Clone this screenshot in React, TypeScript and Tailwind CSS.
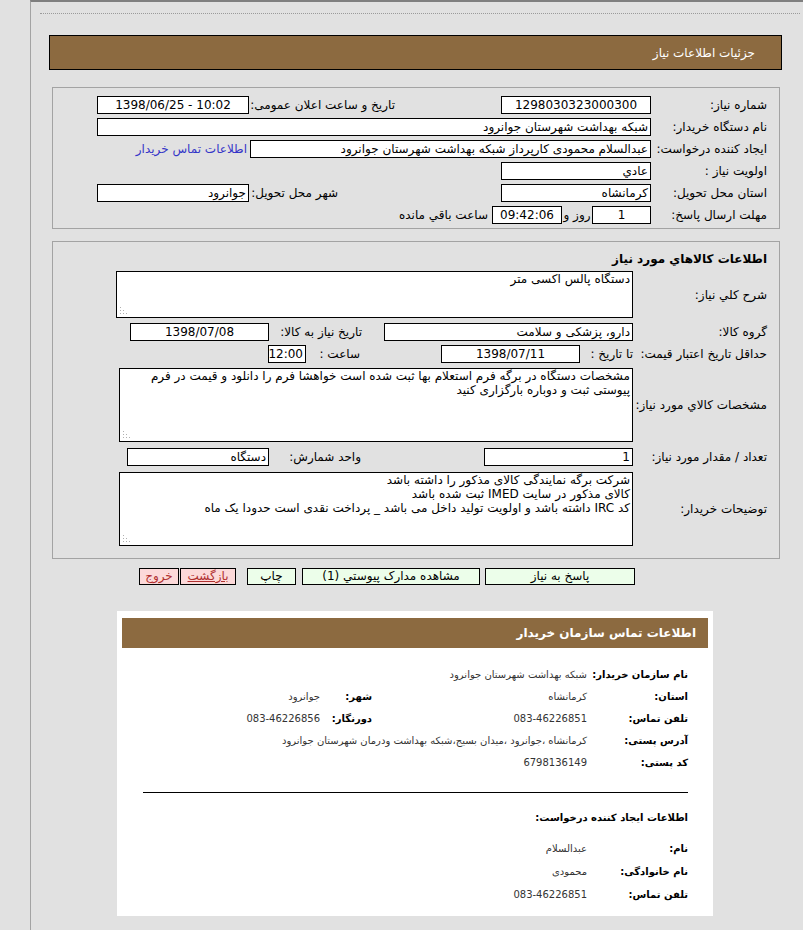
import React from "react";

const box =
  "bg-white border border-black h-[18px] leading-[16px] px-[2px] whitespace-nowrap overflow-hidden shrink-0";

function Grip() {
  return (
    <svg width="9" height="9" className="absolute left-[2px] bottom-[2px]">
      <rect x="1" y="1" width="1" height="1" fill="#b0b0b0" />
      <rect x="1" y="4" width="1" height="1" fill="#b0b0b0" />
      <rect x="4" y="4" width="1" height="1" fill="#b0b0b0" />
      <rect x="1" y="7" width="1" height="1" fill="#b0b0b0" />
      <rect x="4" y="7" width="1" height="1" fill="#b0b0b0" />
      <rect x="7" y="7" width="1" height="1" fill="#b0b0b0" />
    </svg>
  );
}

function L1({ children }: { children: React.ReactNode }) {
  return <div className="w-[128px] pr-[12px] shrink-0 whitespace-nowrap">{children}</div>;
}
function L2({ children }: { children: React.ReactNode }) {
  return <div className="w-[146px] pr-[12px] shrink-0 whitespace-nowrap">{children}</div>;
}

function CRow({ children, h }: { children: React.ReactNode; h?: string }) {
  return <div className={"flex items-center " + (h ?? "h-[22px]")}>{children}</div>;
}
function CLabel({ children }: { children: React.ReactNode }) {
  return <div className="w-[101px] shrink-0 font-bold text-[10px] text-black whitespace-nowrap">{children}</div>;
}
function CVal({ children, w }: { children: React.ReactNode; w?: string }) {
  return (
    <div className={(w ?? "") + " text-[10px] text-[#333] whitespace-nowrap shrink-0"}>{children}</div>
  );
}

export default function App() {
  return (
    <div className="w-[803px] h-[930px] overflow-hidden bg-[#e1e1e1] flex font-['DejaVu_Sans',sans-serif] text-[12px] text-black">
      <div className="w-[30px] shrink-0" />
      <div className="flex-1 border-l border-l-[#a3a3a3] border-t-2 border-t-[#7f7f7f] flex flex-col">
        <div className="mt-[11px] ml-[9px] w-[760px] border-t border-dotted border-[#9a9a9a]" />

        <div
          dir="rtl"
          className="mt-[21px] ml-[18px] w-[733px] h-[35px] bg-[#8c6a40] border border-black flex items-center pr-[26px] text-white"
        >
          جزئیات اطلاعات نیاز
        </div>

        {/* Section 1 */}
        <div dir="rtl" className="mt-[17px] ml-[21px] w-[728px] h-[142px] border border-[#a3a3a3] pt-[6px]">
          <CRow>
            <L1>شماره نیاز:</L1>
            <div className={box + " w-[150px] text-center"}>1298030323000300</div>
            <div className="w-[252px] pr-[106px] shrink-0 whitespace-nowrap">تاریخ و ساعت اعلان عمومی:</div>
            <div dir="ltr" className={box + " w-[152px] text-center"}>1398/06/25 - 10:02</div>
          </CRow>
          <CRow>
            <L1>نام دستگاه خریدار:</L1>
            <div className={box + " w-[554px] text-right"}>شبکه بهداشت شهرستان جوانرود</div>
          </CRow>
          <CRow>
            <L1>ایجاد کننده درخواست:</L1>
            <div className={box + " w-[401px] text-right"}>عبدالسلام محمودی کارپرداز شبکه بهداشت شهرستان جوانرود</div>
            <div className="mr-[3px] text-[#3535c8] whitespace-nowrap">اطلاعات تماس خریدار</div>
          </CRow>
          <CRow>
            <L1>اولویت نیاز :</L1>
            <div className={box + " w-[150px] text-right"}>عادي</div>
          </CRow>
          <CRow>
            <L1>استان محل تحویل:</L1>
            <div className={box + " w-[150px] text-right"}>کرمانشاه</div>
            <div className="w-[252px] pr-[163px] shrink-0 whitespace-nowrap">شهر محل تحویل:</div>
            <div className={box + " w-[152px] text-right"}>جوانرود</div>
          </CRow>
          <CRow>
            <L1>مهلت ارسال پاسخ:</L1>
            <div className={box + " w-[59px] text-center"}>1</div>
            <div className="w-[30px] shrink-0 text-center whitespace-nowrap">روز و</div>
            <div className={box + " w-[70px] text-center"}>09:42:06</div>
            <div className="mr-[4px] whitespace-nowrap">ساعت باقي مانده</div>
          </CRow>
        </div>

        {/* Section 2 */}
        <div dir="rtl" className="mt-[12px] ml-[21px] w-[728px] h-[318px] border border-[#a3a3a3] flex flex-col">
          <div className="h-[29px] pt-[9px] pr-[12px] font-bold leading-[16px] shrink-0">اطلاعات كالاهاي مورد نياز</div>
          <div className="flex items-center h-[47px] shrink-0">
            <L2>شرح کلي نیاز:</L2>
            <div className="relative w-[517px] h-[47px] bg-white border border-black px-[2px] leading-[14px] whitespace-nowrap">
              دستگاه پالس اکسی متر
              <Grip />
            </div>
          </div>
          <div className="flex items-center h-[18px] mt-[5px] shrink-0">
            <L2>گروه کالا:</L2>
            <div className={box + " w-[249px] text-right"}>دارو، پزشکی و سلامت</div>
            <div className="w-[115px] pr-[22px] shrink-0 whitespace-nowrap">تاریخ نیاز به کالا:</div>
            <div className={box + " w-[139px] text-center"}>1398/07/08</div>
          </div>
          <div className="flex items-center h-[18px] mt-[4px] shrink-0">
            <L2>حداقل تاریخ اعتبار قیمت:</L2>
            <div className="w-[53px] shrink-0 whitespace-nowrap text-right">تا تاریخ :</div>
            <div className={box + " w-[139px] text-center"}>1398/07/11</div>
            <div className="w-[135px] pr-[81px] shrink-0 whitespace-nowrap">ساعت :</div>
            <div className={box + " w-[38px] text-center px-0"}>12:00</div>
          </div>
          <div className="flex items-center h-[74px] mt-[5px] shrink-0">
            <L2>مشخصات کالاي مورد نياز:</L2>
            <div className="relative w-[514px] h-[74px] bg-white border border-black px-[2px] leading-[14px] whitespace-nowrap overflow-hidden">
              <div>مشخصات دستگاه در برگه فرم استعلام بها ثبت شده است خواهشا فرم را دانلود و قیمت در فرم</div>
              <div>پیوستی ثبت و دوباره بارگزاری کنید</div>
              <Grip />
            </div>
          </div>
          <div className="flex items-center h-[18px] mt-[6px] shrink-0">
            <L2>تعداد / مقدار مورد نیاز:</L2>
            <div className={box + " w-[149px] text-right"}>1</div>
            <div className="w-[215px] pr-[123px] shrink-0 whitespace-nowrap">واحد شمارش:</div>
            <div className={box + " w-[142px] text-right"}>دستگاه</div>
          </div>
          <div className="flex items-center h-[74px] mt-[6px] shrink-0">
            <L2>توضیحات خریدار:</L2>
            <div className="relative w-[514px] h-[74px] bg-white border border-black px-[2px] leading-[14px] whitespace-nowrap overflow-hidden">
              <div>شرکت برگه نمایندگی کالای مذکور را داشته باشد</div>
              <div>کالای مذکور در سایت IMED ثبت شده باشد</div>
              <div>کد IRC داشته باشد و اولویت تولید داخل می باشد _ پرداخت نقدی است حدودا یک ماه</div>
              <Grip />
            </div>
          </div>
        </div>

        {/* Buttons */}
        <div dir="rtl" className="mt-[9px] ml-[21px] w-[728px] pr-[145px] flex items-center h-[17px]">
          <div className="w-[150px] h-[17px] bg-[#ecfeea] border border-black text-center leading-[15px] shrink-0">پاسخ به نیاز</div>
          <div className="mr-[5px] w-[178px] h-[17px] bg-[#ecfeea] border border-black text-center leading-[15px] shrink-0 whitespace-nowrap">مشاهده مدارک پیوستي (1)</div>
          <div className="mr-[6px] w-[49px] h-[17px] bg-[#ecfeea] border border-black text-center leading-[15px] shrink-0">چاپ</div>
          <div className="mr-[11px] w-[56px] h-[17px] bg-[#fcd9d9] border border-black text-center leading-[15px] shrink-0 text-[#b03030] underline">بازگشت</div>
          <div className="mr-[1px] w-[40px] h-[17px] bg-[#fcd9d9] border border-black text-center leading-[15px] shrink-0 text-[#b03030]">خروج</div>
        </div>

        {/* Contact panel */}
        <div dir="rtl" className="mt-[26px] ml-[86px] w-[596px] h-[305px] bg-white pt-[7px] shrink-0">
          <div className="mr-[5px] w-[586px] h-[30px] bg-[#8c6a40] text-white font-bold text-[12px] pr-[12px] flex items-center">
            اطلاعات تماس سازمان خریدار
          </div>
          <div className="mt-[15px] pr-[25px]">
            <CRow>
              <CLabel>نام سازمان خریدار:</CLabel>
              <CVal>شبکه بهداشت شهرستان جوانرود</CVal>
            </CRow>
            <CRow>
              <CLabel>استان:</CLabel>
              <CVal w="w-[215px]">کرمانشاه</CVal>
              <div className="w-[52px] shrink-0 font-bold text-[10px] whitespace-nowrap">شهر:</div>
              <CVal>جوانرود</CVal>
            </CRow>
            <CRow>
              <CLabel>تلفن تماس:</CLabel>
              <CVal w="w-[215px]">083-46226851</CVal>
              <div className="w-[52px] shrink-0 font-bold text-[10px] whitespace-nowrap">دورنگار:</div>
              <CVal>083-46226856</CVal>
            </CRow>
            <CRow>
              <CLabel>آدرس پستی:</CLabel>
              <CVal>کرمانشاه ،جوانرود ،میدان بسیج،شبکه بهداشت ودرمان شهرستان جوانرود</CVal>
            </CRow>
            <CRow>
              <CLabel>کد پستی:</CLabel>
              <CVal>6798136149</CVal>
            </CRow>
          </div>
          <div className="mt-[19px] mr-[25px] w-[545px] h-px bg-black" />
          <div className="mt-[18px] pr-[25px] h-[14px] leading-[14px] font-bold text-[10px]">اطلاعات ایجاد کننده درخواست:</div>
          <div className="mt-[12px] pr-[25px]">
            <CRow h="h-[23px]">
              <CLabel>نام:</CLabel>
              <CVal>عبدالسلام</CVal>
            </CRow>
            <CRow h="h-[23px]">
              <CLabel>نام خانوادگی:</CLabel>
              <CVal>محمودی</CVal>
            </CRow>
            <CRow h="h-[22px]">
              <CLabel>تلفن تماس:</CLabel>
              <CVal>083-46226851</CVal>
            </CRow>
          </div>
        </div>
      </div>
    </div>
  );
}
